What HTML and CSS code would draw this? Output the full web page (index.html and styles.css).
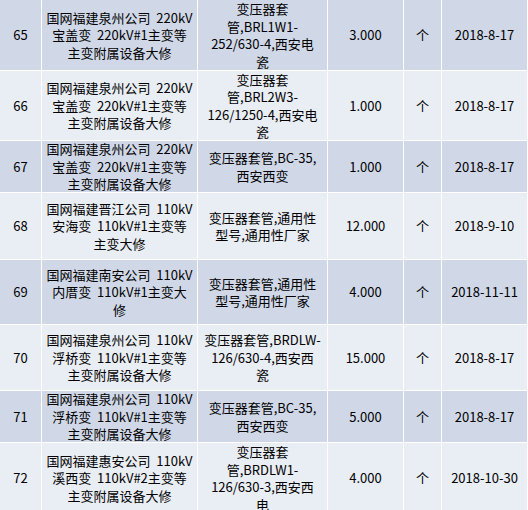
FILE: index.html
```html
<!DOCTYPE html>
<html lang="zh-CN">
<head>
<meta charset="utf-8">
<title>设备大修清单</title>
<link rel="stylesheet" href="styles.css">
</head>
<body>
<div class="sheet">
  <div class="cell dark">65</div>
  <div class="cell dark">国网福建泉州公司 220kV<br>宝盖变 220kV#1主变等<br>主变附属设备大修</div>
  <div class="cell dark">变压器套<br>管,BRL1W1-<br>252/630-4,西安电<br>瓷</div>
  <div class="cell dark">3.000</div>
  <div class="cell dark">个</div>
  <div class="cell dark">2018-8-17</div>

  <div class="cell light">66</div>
  <div class="cell light">国网福建泉州公司 220kV<br>宝盖变 220kV#1主变等<br>主变附属设备大修</div>
  <div class="cell light">变压器套<br>管,BRL2W3-<br>126/1250-4,西安电<br>瓷</div>
  <div class="cell light">1.000</div>
  <div class="cell light">个</div>
  <div class="cell light">2018-8-17</div>

  <div class="cell dark">67</div>
  <div class="cell dark">国网福建泉州公司 220kV<br>宝盖变 220kV#1主变等<br>主变附属设备大修</div>
  <div class="cell dark">变压器套管,BC-35,<br>西安西变</div>
  <div class="cell dark">1.000</div>
  <div class="cell dark">个</div>
  <div class="cell dark">2018-8-17</div>

  <div class="cell light">68</div>
  <div class="cell light">国网福建晋江公司 110kV<br>安海变 110kV#1主变等<br>主变大修</div>
  <div class="cell light">变压器套管,通用性<br>型号,通用性厂家</div>
  <div class="cell light">12.000</div>
  <div class="cell light">个</div>
  <div class="cell light">2018-9-10</div>

  <div class="cell dark">69</div>
  <div class="cell dark">国网福建南安公司 110kV<br>内厝变 110kV#1主变大<br>修</div>
  <div class="cell dark">变压器套管,通用性<br>型号,通用性厂家</div>
  <div class="cell dark">4.000</div>
  <div class="cell dark">个</div>
  <div class="cell dark">2018-11-11</div>

  <div class="cell light">70</div>
  <div class="cell light">国网福建泉州公司 110kV<br>浮桥变 110kV#1主变等<br>主变附属设备大修</div>
  <div class="cell light">变压器套管,BRDLW-<br>126/630-4,西安西<br>瓷</div>
  <div class="cell light">15.000</div>
  <div class="cell light">个</div>
  <div class="cell light">2018-8-17</div>

  <div class="cell dark">71</div>
  <div class="cell dark">国网福建泉州公司 110kV<br>浮桥变 110kV#1主变等<br>主变附属设备大修</div>
  <div class="cell dark">变压器套管,BC-35,<br>西安西变</div>
  <div class="cell dark">5.000</div>
  <div class="cell dark">个</div>
  <div class="cell dark">2018-8-17</div>

  <div class="cell light">72</div>
  <div class="cell light">国网福建惠安公司 110kV<br>溪西变 110kV#2主变等<br>主变附属设备大修</div>
  <div class="cell light">变压器套<br>管,BRDLW1-<br>126/630-3,西安西<br>电</div>
  <div class="cell light">4.000</div>
  <div class="cell light">个</div>
  <div class="cell light">2018-10-30</div>
</div>
</body>
</html>
```

FILE: styles.css
```css
html, body {
  margin: 0;
  padding: 0;
  background: #ffffff;
  overflow: hidden;
}

.sheet {
  display: grid;
  grid-template-columns: 41px 155px 129px 75px 37px 85px;
  grid-template-rows: 70px 69px 51px 66px 64px 65px 51px 70px;
  gap: 1px;
  width: 527px;
  background: #ffffff;
  font-family: "Noto Sans CJK SC", "Noto Sans", sans-serif;
  font-size: 13px;
  line-height: 17.5px;
  word-spacing: 3px;
  color: #000000;
}

.cell {
  display: flex;
  align-items: center;
  justify-content: center;
  text-align: center;
  overflow: hidden;
}

.dark {
  background: #d0d8e8;
}

.light {
  background: #e9edf4;
}
```
